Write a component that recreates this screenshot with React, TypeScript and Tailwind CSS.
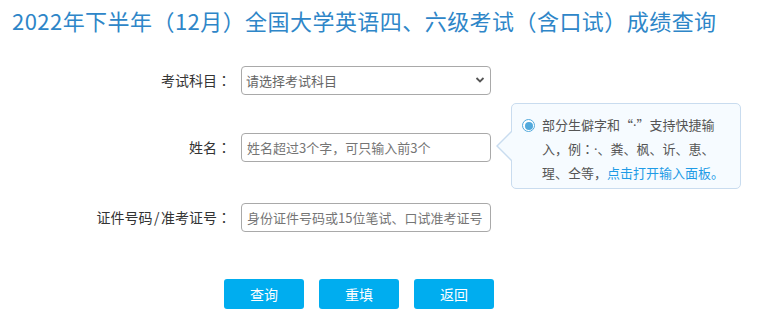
import { useState } from 'react';

const FONT = '[font-family:"Noto_Sans_CJK_SC","Noto_Sans",sans-serif]';

// fullwidth colon centred in its box, as in the page's original font
function Colon() {
  return <span className='[font-family:"Noto_Sans_CJK_JP",sans-serif]'>：</span>;
}

function Row({ label, children }: { label: React.ReactNode; children: React.ReactNode }) {
  return (
    <div className="flex items-center">
      <label className="w-[231px] text-right text-[14px] text-[#333]">{label}<Colon /></label>
      <div className="ml-[10px]">{children}</div>
    </div>
  );
}

export default function App() {
  const [subject, setSubject] = useState('');
  const [name, setName] = useState('');
  const [idNo, setIdNo] = useState('');

  return (
    <div className={`w-[766px] h-[333px] bg-white ${FONT} relative overflow-hidden`}>
      {/* TITLE */}
      <h1 className="pl-[12px] pt-[5px] text-[22px] leading-[30px] tracking-[0.45px] text-[#2e86c8] whitespace-nowrap">
        2022年下半年（12月）全国大学英语四、六级考试（含口试）成绩查询
      </h1>

      {/* FORM */}
      <div className="mt-[31px]">
        <Row label="考试科目">
          <div className="relative w-[250px] h-[29px]">
            <select value={subject} onChange={e => setSubject(e.target.value)}
              className="appearance-none w-full h-full border border-[#a9a9a9] rounded-[4px] pl-[4px] text-[13px] text-[#666] bg-white outline-none">
              <option value="">请选择考试科目</option>
              <option value="cet4">英语四级笔试</option>
              <option value="cet6">英语六级笔试</option>
            </select>
            <svg className="absolute right-[6px] top-[10px] pointer-events-none" width="10" height="8" viewBox="0 0 10 8">
              <path d="M1.5 2 L5 5.5 L8.5 2" fill="none" stroke="#555" strokeWidth="1.8" />
            </svg>
          </div>
        </Row>

        <div className="mt-[38px]">
          <Row label="姓名">
            <input value={name} onChange={e => setName(e.target.value)}
              placeholder="姓名超过3个字，可只输入前3个"
              className="w-[250px] h-[29px] border border-[#a9a9a9] rounded-[4px] px-[5px] text-[13px] text-[#333] placeholder:text-[#757575] outline-none" />
          </Row>
        </div>

        <div className="mt-[41px]">
          <Row label={<>证件号码<span className="px-[1.5px]">/</span>准考证号</>}>
            <input value={idNo} onChange={e => setIdNo(e.target.value)}
              placeholder="身份证件号码或15位笔试、口试准考证号"
              className="w-[250px] h-[29px] border border-[#a9a9a9] rounded-[4px] px-[5px] text-[13px] text-[#333] placeholder:text-[#757575] outline-none" />
          </Row>
        </div>

        {/* BUTTONS */}
        <div className="mt-[47px] pl-[224px] flex gap-[15px]">
          {['查询', '重填', '返回'].map(t => (
            <button key={t}
              className="w-[80px] h-[30px] rounded-[3px] bg-[#00adef] text-white text-[14px] hover:bg-[#0099d6]">
              {t}
            </button>
          ))}
        </div>
      </div>

      {/* TIP */}
      <div className="absolute left-[511px] top-[103px] w-[230px] h-[86px] border border-[#c9dcef] rounded-[5px] bg-[#f6fbff] pl-[10px] pt-[9px] flex gap-[7px]">
        <span className="mt-[6px] w-[13px] h-[13px] rounded-full border border-[#52a9dc] flex items-center justify-center shrink-0 bg-white">
          <span className="w-[8px] h-[8px] rounded-full bg-[#52a9dc]" />
        </span>
        <div className="text-[13px] leading-[23px] text-[#555] whitespace-nowrap">
          部分生僻字和“<span className='[font-family:"Noto_Sans",sans-serif]'>·</span>”支持快捷输<br />
          入，例<Colon /><span className='[font-family:"Noto_Sans",sans-serif]'>·</span>、粪、枫、䜣、恵、<br />
          瑆、仝等，<span className="text-[#1f9be6] cursor-pointer">点击打开输入面板。</span>
        </div>
        {/* arrow */}
        <span className="absolute left-[-16px] top-[26px] w-0 h-0 border-y-[16px] border-y-transparent border-r-[16px] border-r-[#c9dcef]" />
        <span className="absolute left-[-14px] top-[27px] w-0 h-0 border-y-[15px] border-y-transparent border-r-[15px] border-r-[#f6fbff]" />
      </div>
    </div>
  );
}
